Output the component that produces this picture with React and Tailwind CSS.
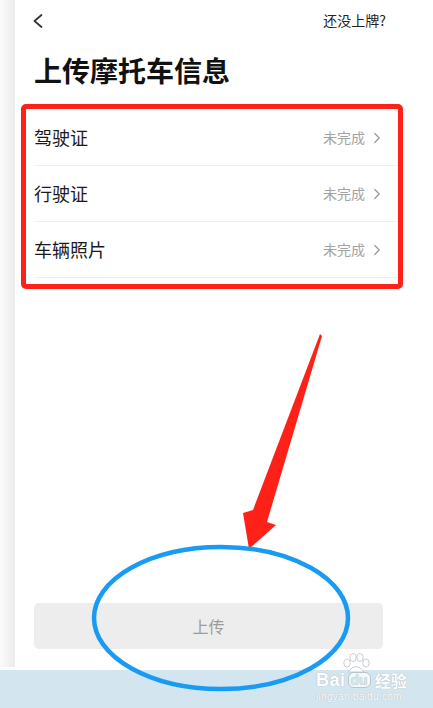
import { ChevronRight } from 'lucide-react'

const ROWS = ['驾驶证', '行驶证', '车辆照片']

function Watermark() {
  return (
    <div className="absolute left-[316px] top-[652px] flex flex-col items-start text-white [text-shadow:0_0_1px_#9aa7ae]">
      <svg width="36" height="22" viewBox="0 0 36 22" className="ml-[22px] mb-[-3px]">
        <g fill="#ffffff" fillOpacity="0.85" stroke="#b8c3c9" strokeWidth="0.8">
          <ellipse cx="9" cy="11" rx="3.2" ry="4" />
          <ellipse cx="15" cy="5.5" rx="3.2" ry="4" />
          <ellipse cx="22" cy="5.5" rx="3.2" ry="4" />
          <ellipse cx="28" cy="11" rx="3.2" ry="4" />
          <path d="M10 20 Q18 9 26 20 Z" />
        </g>
      </svg>
      <div className="flex items-center gap-[2px] leading-none">
        <span className="font-['Liberation_Sans',sans-serif] text-[18px] font-bold tracking-[0.5px]">Bai</span>
        <span className="rounded-[6px] border border-[#b8c3c9] bg-white/80 px-[2px] font-['Liberation_Sans',sans-serif] text-[14px] font-bold text-[#d7e6ee]">du</span>
        <span className="ml-[2px] font-['Noto_Sans_CJK_SC',sans-serif] text-[16px] font-bold">经验</span>
      </div>
      <div className="mt-[3px] font-['Liberation_Sans',sans-serif] text-[10px] leading-none tracking-[0.3px]">jingyan.baidu.com</div>
    </div>
  )
}

export default function App() {
  return (
    <div className="relative h-[708px] w-[433px] overflow-hidden bg-white font-['Noto_Sans_CJK_SC','Noto_Sans',sans-serif]">
      <div className="flex h-[670px]">
        {/* left edge of the phone screen */}
        <div className="h-[667px] w-[15px] bg-gradient-to-r from-[#fbfbfb] to-[#ececec]" />

        <div className="flex flex-1 flex-col">
          {/* header */}
          <div className="flex h-[40px] items-center justify-between pl-[18px] pr-[47px]">
            <svg width="10" height="14" viewBox="0 0 10 14" className="mt-[2px]">
              <polyline points="8.5,1 1.5,7 8.5,13" fill="none" stroke="#333" strokeWidth="1.7" strokeLinecap="round" strokeLinejoin="round" />
            </svg>
            <span className="text-[14px] text-[#222]">还没上牌?</span>
          </div>

          <h1 className="mt-[10px] h-[40px] pl-[19px] text-[28px] font-bold leading-[40px] text-[#111]">上传摩托车信息</h1>

          {/* list */}
          <div className="ml-[19px] mr-[34px] mt-[20px]">
            {ROWS.map((label) => (
              <div key={label} className="flex h-[56px] items-center justify-between border-b border-[#efefef] pr-[13px]">
                <span className="text-[18px] text-[#1a1a1a]">{label}</span>
                <span className="flex items-center gap-[3px] text-[14px] text-[#a3a3a3]">
                  未完成
                  <ChevronRight className="h-[18px] w-[18px] text-[#9a9a9a]" strokeWidth={1.6} />
                </span>
              </div>
            ))}
          </div>

          <button className="ml-[19px] mr-[50px] mt-[325px] flex h-[46px] items-center justify-center rounded-[5px] bg-[#ededed] text-[16px] text-[#9b9b9b]">
            上传
          </button>
        </div>
      </div>

      <div className="h-[38px] bg-[#d3e5ee]" />

      {/* annotations drawn over the screenshot */}
      <div className="absolute left-[21px] top-[104px] h-[185px] w-[382px] rounded-[5px] border-[5px] border-[#fe2118]" />

      <svg className="absolute left-0 top-0" width="433" height="708" viewBox="0 0 433 708">
        <polygon points="320,334 322,336 267,522 276,525 249,549 243,513 253,510" fill="#fe2118" />
        <ellipse cx="221" cy="618" rx="127" ry="71" fill="none" stroke="#1a9bf3" strokeWidth="4.5" />
      </svg>

      <Watermark />
    </div>
  )
}
